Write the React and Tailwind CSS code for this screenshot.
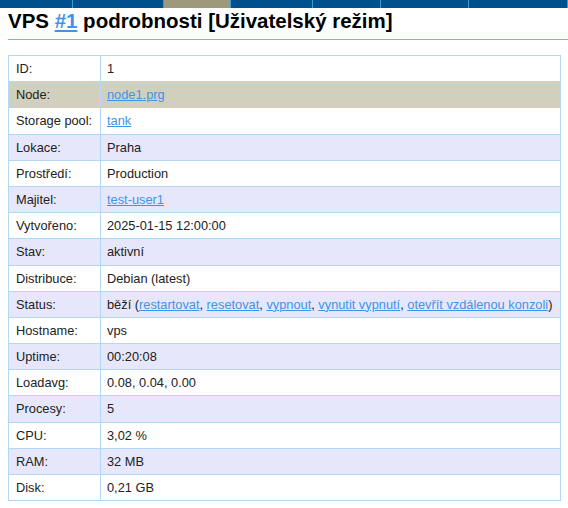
import React from 'react'

const navItems = [
  { w: 73 },
  { w: 91 },
  { w: 67, active: true },
  { w: 82 },
  { w: 68 },
  { w: 88 },
  { w: 99 },
]

function A({ children }) {
  return (
    <a href="#" className="text-[#3d94ea] underline">
      {children}
    </a>
  )
}

const rows = [
  ['ID:', '1'],
  ['Node:', <A>node1.prg</A>],
  ['Storage pool:', <A>tank</A>],
  ['Lokace:', 'Praha'],
  ['Prostředí:', 'Production'],
  ['Majitel:', <A>test-user1</A>],
  ['Vytvořeno:', '2025-01-15 12:00:00'],
  ['Stav:', 'aktivní'],
  ['Distribuce:', 'Debian (latest)'],
  [
    'Status:',
    <>
      běží (<A>restartovat</A>, <A>resetovat</A>, <A>vypnout</A>, <A>vynutit vypnutí</A>,{' '}
      <A>otevřít vzdálenou konzoli</A>)
    </>,
  ],
  ['Hostname:', 'vps'],
  ['Uptime:', '00:20:08'],
  ['Loadavg:', '0.08, 0.04, 0.00'],
  ['Procesy:', '5'],
  ['CPU:', '3,02 %'],
  ['RAM:', '32 MB'],
  ['Disk:', '0,21 GB'],
]

export default function App() {
  return (
    <div className="min-h-[508px] bg-white font-['Liberation_Sans',Arial,sans-serif] text-[#222]">
      {/* top menu */}
      <div className="flex h-2 bg-[#01508e]">
        {navItems.map((n, i) => (
          <div
            key={i}
            style={{ width: n.w }}
            className={`h-full border-r border-[#3b9ad8] ${n.active ? 'bg-[#9c9a7a]' : ''}`}
          />
        ))}
      </div>

      <div className="pl-2">
        <h1 className="mt-px border-b border-[#7fb5e6] pb-[7px] text-[20.48px] leading-[23px] font-bold text-black">
          VPS <a href="#" className="text-[#3d94ea] underline">#1</a> podrobnosti [Uživatelský režim]
        </h1>

        <table className="mt-[15px] w-[553px] border-collapse border border-[#b3d7f7] text-[12.8px] leading-[15.18px]">
          <tbody>
            {rows.map(([label, value], i) => (
              <tr
                key={label}
                className={i === 1 ? 'bg-[#d1d0bc]' : i % 2 === 1 ? 'bg-[#e7e7fb]' : 'bg-white'}
              >
                <td className="w-[92px] border border-[#b3d7f7] px-[7px] py-[5px] whitespace-nowrap">
                  {label}
                </td>
                <td className="border border-[#b3d7f7] pl-[6px] pr-[7px] py-[5px] whitespace-nowrap">{value}</td>
              </tr>
            ))}
          </tbody>
        </table>
      </div>
    </div>
  )
}
